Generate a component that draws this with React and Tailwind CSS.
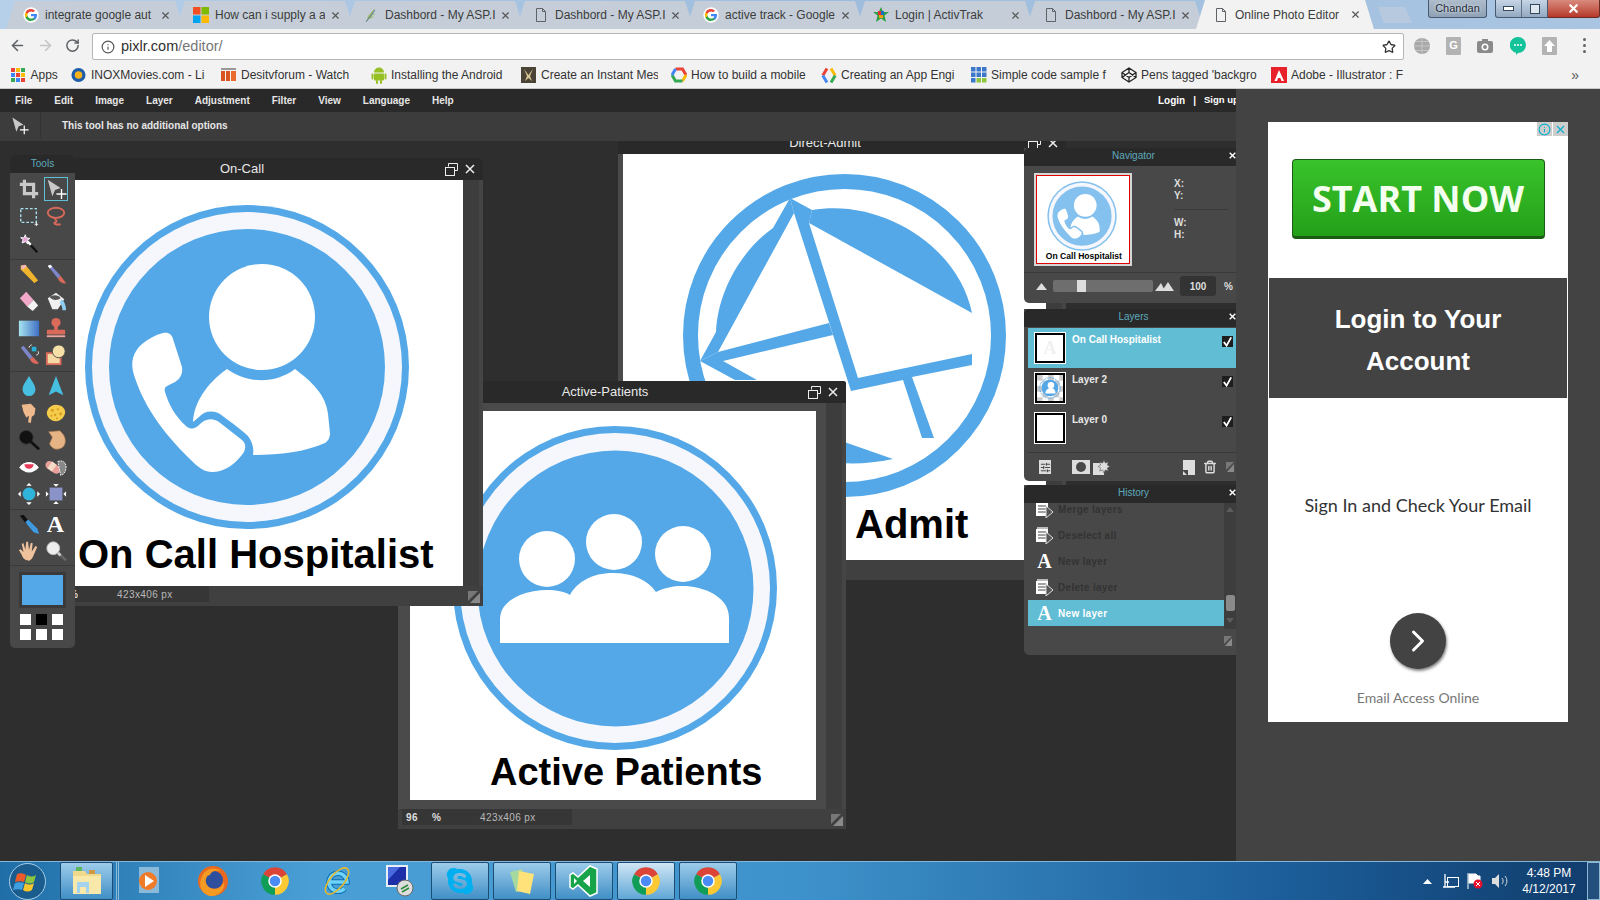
import React from "react";
import { ArrowLeft, ArrowRight, RotateCw, Info, Star, X, ChevronRight, Trash2, SlidersHorizontal } from "lucide-react";
import { FaSkype } from "react-icons/fa";

const G = ({ s = 16 }) => (
  <svg width={s} height={s} viewBox="0 0 24 24" className="shrink-0">
    <circle cx="12" cy="12" r="11.5" fill="#fff" />
    <path d="M21 12.3c0-.7-.1-1.3-.2-1.9H12v3.5h5a4.4 4.4 0 0 1-1.9 2.8v2.3h3c1.8-1.6 2.9-4 2.9-6.7z" fill="#4285F4" />
    <path d="M12 21c2.5 0 4.6-.8 6.1-2.2l-3-2.3c-.8.6-1.9.9-3.1.9-2.4 0-4.4-1.6-5.1-3.8H3.8v2.4A9 9 0 0 0 12 21z" fill="#34A853" />
    <path d="M6.9 13.6a5.400 5.400 0 0 1 0-3.400V7.800H3.800a9 9 0 0 0 0 8.200z" fill="#FBBC05" />
    <path d="M12 6.600c1.300 0 2.500.5 3.400 1.300l2.600-2.600A9 9 0 0 0 3.800 7.800l3.100 2.400C7.600 8.100 9.600 6.600 12 6.600z" fill="#EA4335" />
  </svg>
);
const Ms = () => (
  <svg width="16" height="16" viewBox="0 0 16 16" className="shrink-0">
    <rect width="7.500" height="7.500" fill="#f25022" /><rect x="8.500" width="7.500" height="7.500" fill="#7fba00" />
    <rect y="8.500" width="7.500" height="7.500" fill="#00a4ef" /><rect x="8.500" y="8.500" width="7.500" height="7.500" fill="#ffb900" />
  </svg>
);
const Doc = () => (
  <svg width="16" height="16" viewBox="0 0 16 16" fill="none" stroke="#5f6368" className="shrink-0">
    <path d="M3.500 1.500h6l3 3v10h-9zM9.500 1.500v3h3" />
  </svg>
);
const Feather = () => (
  <svg width="16" height="16" viewBox="0 0 16 16" className="shrink-0">
    <path d="M12 1 5 9l-2 6 3-3 5-2-3-1 4-2-2-1z" fill="#9fb86a" /><path d="M3 15 12 3" stroke="#5b78a8" fill="none" />
  </svg>
);
const Activ = () => (
  <svg width="16" height="16" viewBox="0 0 16 16" className="shrink-0">
    <path d="M8 0l2.200 5H16l-4.500 3.500L13 15l-5-3.500L3 15l1.500-6.500L0 5h5.800z" fill="#2f9e44" />
    <rect x="5" y="4" width="3" height="4" fill="#e03131" /><rect x="8" y="4" width="3" height="4" fill="#1971c2" /><rect x="6" y="8" width="4" height="3" fill="#f59f00" />
  </svg>
);

function Tab({ icon, title, active }) {
  return (
    <div className={`relative -mr-[8px] flex h-[28px] w-[178px] shrink-0 items-center pl-[17px] pr-[9px] [clip-path:polygon(0_100%,9px_0,calc(100%-9px)_0,100%_100%)] ${active ? "z-10 h-[29px] bg-[#f2f2f2]" : "bg-[#c5ced8]"}`}>
      {icon}
      <span className="ml-[6px] w-[110px] overflow-hidden whitespace-nowrap text-[12px] text-[#3c3c3c]">{title}</span>
      <X size={11} strokeWidth={2.500} className="ml-[5px] shrink-0 text-[#555]" />
    </div>
  );
}

function TabStrip() {
  const tabs = [
    [<G />, "integrate google aut"],
    [<Ms />, "How can i supply a a"],
    [<Feather />, "Dashbord - My ASP.I"],
    [<Doc />, "Dashbord - My ASP.I"],
    [<G />, "active track - Google"],
    [<Activ />, "Login | ActivTrak"],
    [<Doc />, "Dashbord - My ASP.I"],
    [<Doc />, "Online Photo Editor", true],
  ];
  return (
    <div className="flex h-[29px] items-end bg-gradient-to-r from-[#b7d0ea] via-[#9dbcdd] to-[#a9c5e2] pl-[6px]">
      {tabs.map((t, i) => <Tab key={i} icon={t[0]} title={t[1]} active={t[2]} />)}
      <div className="mb-[6px] ml-[12px] h-[16px] w-[34px] bg-[#b7c9de] [clip-path:polygon(0_0,80%_0,100%_100%,16%_100%)]" />
      <div className="ml-auto flex h-[29px] items-start self-start">
        <div className="mr-[8px] flex h-[18px] w-[59px] items-center justify-center rounded-b-[3px] border border-t-0 border-[#47596e] bg-gradient-to-b from-[#aebccb] to-[#8ea1b5] text-[11px] text-[#1d2a38] [text-shadow:0_0_3px_white]">Chandan</div>
        <div className="flex h-[18px] w-[53px] overflow-hidden rounded-bl-[3px] border border-t-0 border-[#47596e] bg-gradient-to-b from-[#c6d5e6] to-[#93a9c1]">
          <div className="flex flex-1 items-center justify-center"><div className="h-[5px] w-[11px] border border-[#33465a] bg-white" /></div>
          <div className="flex flex-1 items-center justify-center border-l border-[#5d7186]"><div className="h-[10px] w-[10px] border border-[#33465a] bg-[#dfe7ef]" /></div>
        </div>
        <div className="flex h-[18px] w-[52px] items-center justify-center rounded-br-[3px] border border-l-0 border-t-0 border-[#6b2a22] bg-gradient-to-b from-[#d98a7e] to-[#b5382a]">
          <X size={13} strokeWidth={4} className="text-white" />
        </div>
      </div>
    </div>
  );
}

function Toolbar() {
  return (
    <div className="flex h-[31px] items-start bg-[#f2f2f2]">
      <div className="flex h-[33px] w-[92px] items-center pl-[9px] text-[#5f6368]">
        <ArrowLeft size={17} strokeWidth={2.200} />
        <ArrowRight size={17} strokeWidth={2.200} className="ml-[11px] text-[#c4c4c4]" />
        <RotateCw size={15} strokeWidth={2.400} className="ml-[11px]" />
      </div>
      <div className="mt-[4px] flex h-[27px] w-[1312px] items-center rounded-[2px] border border-[#b5b5b5] bg-white pl-[8px] pr-[7px] pt-[1px]">
        <Info size={14} className="text-[#555]" />
        <span className="ml-[6px] text-[14.500px] text-[#303030]">pixlr.com<span className="text-[#777]">/editor/</span></span>
        <Star size={14} strokeWidth={2.200} className="ml-auto text-[#333]" />
      </div>
      <div className="relative flex h-[31px] flex-1 items-center pl-[9px] pt-[2px]">
        <svg width="18" height="18" viewBox="0 0 18 18" className="shrink-0"><circle cx="9" cy="9" r="8" fill="#a9a9a9" /><path d="M1 9h16M9 1v16M3 4.500h12M3 13.500h12" stroke="#c6c6c6" /></svg>
        <div className="ml-[15px] flex h-[18px] w-[15px] shrink-0 items-center justify-center rounded-[1px] bg-[#b3b3b3] text-[11px] font-bold text-white">G</div>
        <svg width="17" height="16" viewBox="0 0 17 16" className="ml-[16px] shrink-0"><rect y="3" width="16" height="12" rx="2" fill="#8a8a8a" /><rect x="5" y="1" width="6" height="3" fill="#8a8a8a" /><circle cx="8" cy="9" r="3.500" fill="#fff" /><circle cx="8" cy="9" r="2" fill="#8a8a8a" /></svg>
        <svg width="16" height="18" viewBox="0 0 16 18" className="ml-[16px] shrink-0"><path d="M8 0a8 8 0 0 1 0 16l-2 2v-2.200A8 8 0 0 1 8 0z" fill="#15c39a" /><circle cx="5" cy="8" r="1" fill="#fff" /><circle cx="8" cy="8" r="1" fill="#fff" /><circle cx="11" cy="8" r="1" fill="#fff" /></svg>
        <svg width="15" height="18" viewBox="0 0 15 18" className="ml-[16px] shrink-0"><rect width="15" height="18" rx="1" fill="#b3b3b3" /><path d="M7.500 3 13 9h-3v6H5V9H2z" fill="#fff" /></svg>
        <div className="ml-[26px] flex flex-col gap-[3px]"><i className="block h-[3px] w-[3px] rounded-full bg-[#5f6368]" /><i className="block h-[3px] w-[3px] rounded-full bg-[#5f6368]" /><i className="block h-[3px] w-[3px] rounded-full bg-[#5f6368]" /></div>
      </div>
    </div>
  );
}

function Bookmarks() {
  const items = [
    [<svg width="15" height="16" viewBox="0 0 16 16"><circle cx="8" cy="8" r="7.500" fill="#1d5ca8" /><circle cx="8" cy="8" r="4" fill="#f6b21a" /></svg>, "INOXMovies.com - Li"],
    [<svg width="17" height="17" viewBox="0 0 17 17"><rect x="1" y="4" width="4" height="10" fill="#d9541e" /><rect x="6" y="4" width="4" height="10" fill="#d9541e" /><rect x="11" y="4" width="5" height="10" fill="#e96c2d" /><rect x="1" y="1" width="15" height="2" fill="#999" /></svg>, "Desitvforum - Watch"],
    [<svg width="16" height="17" viewBox="0 0 16 17" fill="#97c024"><path d="M3 5.500a5 5 0 0 1 10 0z" /><rect x="3" y="6.500" width="10" height="7" rx="1" /><rect x="0.500" y="6.500" width="2" height="6" rx="1" /><rect x="13.500" y="6.500" width="2" height="6" rx="1" /><rect x="5" y="13" width="2" height="4" rx="1" /><rect x="9" y="13" width="2" height="4" rx="1" /></svg>, "Installing the Android"],
    [<svg width="15" height="16" viewBox="0 0 15 16"><rect width="15" height="16" fill="#4b4436" /><path d="M3 2 7.500 8 12 2 9 9l2 5-3.500-3L4 14l2-5z" fill="#d9c694" /></svg>, "Create an Instant Mes"],
    [<svg width="16" height="16" viewBox="0 0 16 16" fill="none" strokeWidth="3"><path d="M4.500 2h7L15 8" stroke="#ea4335" /><path d="M15 8l-3.500 6" stroke="#fbbc05" /><path d="M11.500 14h-7L1 8" stroke="#34a853" /><path d="M1 8l3.500-6" stroke="#4285f4" /></svg>, "How to build a mobile"],
    [<svg width="16" height="17" viewBox="0 0 16 17" fill="none" strokeWidth="3"><path d="M6 1.500 1.800 8.500" stroke="#ea4335" /><path d="M1.800 8.500 6 15.500" stroke="#4285f4" /><path d="M10 1.500l4.200 7" stroke="#fbbc05" /><path d="M14.200 8.500 10 15.500" stroke="#34a853" /></svg>, "Creating an App Engi"],
    [<svg width="16" height="16" viewBox="0 0 16 16"><g fill="#3b78c9"><rect width="4.500" height="4.500" /><rect x="5.500" width="4.500" height="4.500" /><rect x="11" width="4.500" height="4.500" /><rect y="5.500" width="4.500" height="4.500" /><rect x="5.500" y="5.500" width="4.500" height="4.500" /><rect x="11" y="5.500" width="4.500" height="4.500" /><rect y="11" width="4.500" height="4.500" /></g><rect x="5.500" y="11" width="4.500" height="4.500" fill="#8ec63f" /><rect x="11" y="11" width="4.500" height="4.500" fill="#8ec63f" /></svg>, "Simple code sample f"],
    [<svg width="16" height="16" viewBox="0 0 16 16" fill="none" stroke="#222" strokeWidth="1.300"><path d="M8 1l7 4.500v5L8 15l-7-4.500v-5zM8 1v4.500M8 15v-4.500M1 5.500l7 5 7-5M1 10.500l7-5 7 5" /></svg>, "Pens tagged 'backgro"],
    [<svg width="16" height="16" viewBox="0 0 16 16"><rect width="16" height="16" fill="#e8202a" /><path d="M8 3 3.500 14H6l1-3h2.500L8.500 9 8 7.500l2.500 6.500H13z" fill="#fff" /></svg>, "Adobe - Illustrator : F"],
  ];
  return (
    <div className="flex h-[29px] items-center border-b border-[#c9c9c9] bg-[#f2f2f2] pl-[11px] pt-[2px] text-[12px] text-[#333]">
      <div className="flex w-[59px] items-center">
        <div className="grid grid-cols-3 gap-[1.500px]">
          {[0, 1, 2, 3, 4, 5, 6, 7, 8].map((i) => <i key={i} className={`block h-[3.500px] w-[3.500px] ${i % 4 === 0 ? "bg-[#ea4335]" : i % 4 === 1 ? "bg-[#fbbc05]" : i % 4 === 2 ? "bg-[#34a853]" : "bg-[#4285f4]"}`} />)}
        </div>
        <span className="ml-[6px]">Apps</span>
      </div>
      {items.map((b, i) => (
        <div key={i} className="flex w-[150px] shrink-0 items-center">
          <span className="flex w-[17px] shrink-0 items-center justify-center">{b[0]}</span>
          <span className="ml-[4px] w-[117px] overflow-hidden whitespace-nowrap">{b[1]}</span>
        </div>
      ))}
      <span className="ml-auto mr-[21px] text-[14px] text-[#555]">»</span>
    </div>
  );
}

function OnCallArt({ blue = "#54a8e8", fontSize = 40 }) {
  return (
    <svg viewBox="40 180 423 406" className="block h-full w-full">
      <rect x="40" y="180" width="423" height="406" fill="#fff" />
      <circle cx="247" cy="367" r="162" fill={blue} />
      <circle cx="247" cy="367" r="155" fill="#f6f7fc" />
      <circle cx="247" cy="367" r="138" fill={blue} />
      <circle cx="262" cy="317" r="53" fill="#fff" />
      <path d="M227 369C248 384 275 384 295 369C312 382 326 395 328 414L330 433C330 438 328 441 325 443C305 452 280 455 253 455C254 449 253 442 247 435C238 427 228 420 220 414C212 410 205 411 199 417L193 422C194 403 206 384 227 369Z" fill="#fff" />
      <path d="M163 333C169 332 172 335 173 339L182 367C183 374 180 379 175 382L167 386C165 387 164 389 165 392C169 405 175 416 186 426C191 430 195 429 199 425C204 419 212 417 219 422L242 440C247 444 246 451 241 456C233 466 223 472 212 472C205 472 199 468 193 462C167 437 145 410 134 375C130 362 133 352 142 344C148 339 155 335 163 333Z" fill="#fff" />
      <text x="78" y="568" fontFamily="'Liberation Sans', Arial, sans-serif" fontWeight="700" fontSize={fontSize} fill="#000">On Call Hospitalist</text>
    </svg>
  );
}

function ActiveArt() {
  const blue = "#54a8e8";
  return (
    <svg viewBox="410 411 406 389" className="block h-full w-full">
      <rect x="410" y="411" width="406" height="389" fill="#fff" />
      <circle cx="615" cy="588" r="162" fill={blue} />
      <circle cx="615" cy="588" r="155" fill="#f6f7fc" />
      <circle cx="615.500" cy="588.500" r="138" fill={blue} />
      <circle cx="547" cy="559" r="28" fill="#fff" />
      <circle cx="614" cy="542" r="28" fill="#fff" />
      <circle cx="683" cy="554" r="28" fill="#fff" />
      <path d="M500 643H729V618C729 606 722 598 710 592C698 586 675 582 656 592C648 580 632 573 613 573C592 573 577 582 570 595C560 589 538 588 520 595C507 601 500 608 500 620Z" fill="#fff" />
      <text x="490" y="785" fontFamily="'Liberation Sans', Arial, sans-serif" fontWeight="700" fontSize="38" fill="#000">Active Patients</text>
    </svg>
  );
}

function DirectArt() {
  const blue = "#54a8e8";
  return (
    <svg viewBox="623 154 423 406" className="block h-full w-full">
      <rect x="623" y="154" width="423" height="406" fill="#fff" />
      <circle cx="844.500" cy="335.500" r="154" fill="none" stroke={blue} strokeWidth="15" />
      <path d="M812 210C880 198 958 245 972 313L809 223Z" fill={blue} />
      <path d="M794 213 790 198 773 228C742 250 718 290 716 332L700 361 718 352Z" fill={blue} />
      <path d="M718 352 829 323 833 335 723 361 757 380H735L700 361Z" fill={blue} />
      <path d="M790 198 812 210 809 223 858 378 972 354 972 365 912 377 934 438H922L903 380 851 391 794 213Z" fill={blue} />
      <path d="M830 437 893 459Q860 466 830 462Z" fill={blue} />
      <text x="855" y="538" fontFamily="'Liberation Sans', Arial, sans-serif" fontWeight="700" fontSize="40" fill="#000">Admit</text>
    </svg>
  );
}

const Restore = () => (
  <svg width="13" height="13" viewBox="0 0 13 13" fill="none" stroke="#eee"><path d="M3.500 3.500v-3h9v7h-3" /><rect x="0.500" y="4.500" width="9" height="8" /></svg>
);
const CloseX = ({ s = 10, c = "#eee", w = 1.500 }) => (
  <svg width={s} height={s} viewBox="0 0 10 10" stroke={c} strokeWidth={w}><path d="M1 1l8 8M9 1l-8 8" /></svg>
);
const Resize = () => (
  <svg width="12" height="12" viewBox="0 0 12 12"><path d="M0 0h10L0 10z" fill="#777" /><path d="M12 2v10H2z" fill="#8a8a8a" /></svg>
);

function Win({ pos, title, pad, children, pct }) {
  return (
    <div className={`absolute flex h-[448px] w-[448px] flex-col rounded-[3px] bg-[#4a4a4a] ${pos}`}>
      <div className="flex h-[22px] shrink-0 items-center rounded-t-[3px] bg-[#292929] text-[13px] text-[#e8e8e8]">
        <div className="-mr-[4px] w-[414px] shrink-0 text-center">{title}</div>
        <Restore />
        <span className="ml-[7px]"><CloseX /></span>
      </div>
      <div className="flex h-[406px] shrink-0">
        <div className={`flex-1 ${pad}`}>{children}</div>
        <div className="w-[16px] bg-[#3d3d3d]" />
        <div className="w-[4px] bg-[#454545]" />
      </div>
      <div className="flex h-[20px] items-start bg-[#404040] pl-[4px] pr-[3px]">
        <div className="flex h-[16px] w-[170px] items-center bg-[#363636] pl-[4px] text-[10px] tracking-[0.400px] text-[#b9b9b9]">
          <span className="w-[26px] font-bold text-[#ddd]">{pct}</span>
          <span className="w-[48px] font-bold text-[#ddd]">%</span>
          <span>423x406 px</span>
        </div>
        <span className="ml-auto mt-[5px]"><Resize /></span>
      </div>
    </div>
  );
}

const toolIcons = {
  crop: <g fill="none" stroke="#c9c9c9" strokeWidth="3.500"><path d="M7 2v15h15" /><path d="M2 7h15v15" /></g>,
  move: <g><path d="M3 2l14 9-6 2-3 7z" fill="#c9c9c9" /><path d="M18 12v11M12.500 17.500h11" stroke="#fff" strokeWidth="1.500" /></g>,
  marquee: <g><rect x="3" y="4" width="17" height="15" fill="none" stroke="#a8e0f0" strokeWidth="1.500" strokeDasharray="3 2" /><path d="M20 19v4M18 21h4" stroke="#fff" /></g>,
  lasso: <g fill="none" stroke="#d9695a" strokeWidth="2"><ellipse cx="12" cy="8.500" rx="9" ry="5.500" /><path d="M10 14c2 2 4 4 1 5s2 3 6 2" /></g>,
  wand: <g><path d="M10 10l11 12" stroke="#111" strokeWidth="2.500" /><path d="M10 10l4 4" stroke="#fff" strokeWidth="2.500" /><path d="M8 3l1 3.500L13 7l-3 2 .5 4-2.500-2.500-3.500 1.500 1-3.500L3 6l3.500.5z" fill="#e8a0d8" stroke="#fff" /></g>,
  pencil: <g><path d="M3 3l5-1 14 17-4 3L3 7z" fill="#efb32e" /><path d="M3 3l5-1 1.500 2-5 3.500z" fill="#f3b7b7" /><path d="M18 22l4-3 1 5z" fill="#444" /></g>,
  brush: <g><path d="M3 3l3-1 11 12-3 3z" fill="#7d86c9" /><path d="M3 3l3-1 2 2-3 2z" fill="#fff" /><path d="M14 17l3-3 6 8c-4 1-7-1-9-5z" fill="#d9695a" /></g>,
  eraser: <g><path d="M2 9l7-7 8 9-7 7z" fill="#f2a8c8" /><path d="M10 18l7-7 5 6-6 6z" fill="#f4f4f4" /></g>,
  bucket: <g><path d="M3 9l9-6 9 7-7 11H8z" fill="#f0f0f0" /><path d="M5 8c3-3 10-3 12 1-4 3-9 2-12-1z" fill="#555" /><path d="M18 10c4 3 5 8 5 12h-4c0-3-1-6-3-8z" fill="#8fcdf0" /></g>,
  gradient: <g><defs><linearGradient id="tg1"><stop offset="0" stopColor="#a7e4f0" /><stop offset="1" stopColor="#3f6fc4" /></linearGradient></defs><rect x="1" y="4" width="22" height="17" fill="url(#tg1)" /></g>,
  stamp: <g fill="#d9695a"><circle cx="12" cy="6" r="5" /><rect x="10" y="9" width="4" height="6" /><rect x="2" y="14" width="20" height="5" rx="1" /><rect x="2" y="20" width="20" height="2" fill="#e9a79d" /></g>,
  replace: <g><path d="M3 4l3-2 10 12-3 3z" fill="#7d86c9" /><path d="M13 17l3-3 7 7c-4 2-8 0-10-4z" fill="#d9695a" /><rect x="15" y="3" width="5" height="5" fill="#2bb0d8" /><path d="M12 4c1-3 3-3 3-3M22 8c1 2 0 4-2 4" stroke="#fff" fill="none" /></g>,
  shape: <g><rect x="2" y="10" width="15" height="12" fill="#f4d9a5" stroke="#d9695a" strokeWidth="2" /><circle cx="15" cy="8" r="7" fill="#f6e0a8" stroke="#4a4a4a" /></g>,
  drop: <path d="M12 1c4 7 7 10 7 15a7 7 0 0 1-14 0c0-5 3-8 7-15z" fill="#46bfe0" />,
  cone: <path d="M12 1l8 21-8-4-8 4z" fill="#46bfe0" />,
  smudge: <path d="M4 3l10-1 5 5-1 7-3 2-1 7-3-1 1-7-3 2-3-6z" fill="#eeb98d" />,
  sponge: <g><path d="M12 3c6 0 10 4 10 8s-4 10-10 10S2 16 2 12 6 3 12 3z" fill="#f4cb4a" /><g fill="#d49a1e"><circle cx="8" cy="9" r="1.500" /><circle cx="14" cy="8" r="1.200" /><circle cx="17" cy="13" r="1.500" /><circle cx="11" cy="14" r="1.300" /><circle cx="7" cy="15" r="1" /><circle cx="13" cy="18" r="1" /></g></g>,
  burn: <g><circle cx="9" cy="9" r="7.500" fill="#111" stroke="#333" /><path d="M14 14l9 8" stroke="#111" strokeWidth="3" /></g>,
  dodge: <path d="M4 3l12-1c4 3 7 8 6 13-1 5-5 7-9 7-4 0-7-3-8-6L8 9z" fill="#e6b385" stroke="#a87a50" strokeWidth="0.700" />,
  eye: <g><path d="M1 12c6-8 16-8 22 0-6 8-16 8-22 0z" fill="#fff" /><path d="M7 9h10a5 5 0 0 1-10 0z" fill="#e83a5a" /><path d="M1 12c6-8 16-8 22 0" fill="none" stroke="#333" /></g>,
  bandage: <g><rect x="0" y="8" width="18" height="9" rx="4.500" transform="rotate(35 9 12)" fill="#e9a09a" /><rect x="5" y="7" width="6" height="9" transform="rotate(35 8 11)" fill="#f4dcc8" /><path d="M14 6c5-2 9 1 9 6s-3 9-6 9z" fill="#888" stroke="#fff" strokeDasharray="2 1" /></g>,
  bloat: <g><circle cx="12" cy="12" r="7" fill="#30b4dc" /><g fill="#fff"><path d="M12 0l3 3H9zM12 24l3-3H9zM0 12l3-3v6zM24 12l-3-3v6z" /></g></g>,
  pinch: <g><rect x="5" y="5" width="14" height="14" fill="#8a93c8" /><g fill="#fff"><path d="M12 4 9 1h6zM12 20l3 3H9zM4 12 1 9v6zM20 12l3-3v6z" /></g></g>,
  dropper: <g><path d="M2 3l4-1 6 7-3 3z" fill="#111" /><path d="M8 10l3-3 10 10 2 6-6-2z" fill="#3f9be0" /></g>,
  hand: <path d="M11 22c-4 0-6-3-7-6L1 11l2-1 3 3L4 4l2-.5 2 7L9 2h2l1 9 2-8 2 .5-1 9 4-6 2 1-4 9c-1 3-3 6-6 6z" fill="#eec29c" />,
  zoom: <g><circle cx="9" cy="9" r="7" fill="#eee" stroke="#bbb" /><path d="M14 14l9 8" stroke="#666" strokeWidth="3" /><path d="M14 14l3 3" stroke="#ccc" strokeWidth="3" /></g>,
};

function Tool({ k, active }) {
  return (
    <div className="flex h-[27px] w-[27px] items-center justify-center">
      <div className={`flex h-[24px] w-[24px] items-center justify-center ${active ? "border border-[#5fc0d8]" : ""}`}>
        {k === "text" ? (
          <span className="font-['Liberation_Serif',serif] text-[24px] font-bold leading-none text-white">A</span>
        ) : (
          <svg width="22" height="22" viewBox="0 0 24 24">{toolIcons[k]}</svg>
        )}
      </div>
    </div>
  );
}
const Group = ({ items, pb }) => (
  <div className={`grid grid-cols-[27px_27px] border-b border-[#3a3a3a] pl-[5px] ${pb}`}>
    {items.map((k) => k === "_" ? <div key={k} /> : <Tool key={k} k={k} active={k === "move"} />)}
  </div>
);

function Tools() {
  return (
    <div className="absolute left-[10px] top-[14px] h-[493px] w-[65px] rounded-[5px] bg-[#484848]">
      <div className="flex h-[18px] items-center justify-center rounded-t-[5px] bg-[#292929] pb-[2px] text-[10px] text-[#5fa9bd]">Tools</div>
      <div className="pt-[2px]">
        <Group items={["crop", "move", "marquee", "lasso", "wand", "_"]} pb="pb-[3px]" />
        <Group items={["pencil", "brush", "eraser", "bucket", "gradient", "stamp", "replace", "shape"]} pb="pb-[3px]" />
        <Group items={["drop", "cone", "smudge", "sponge", "burn", "dodge", "eye", "bandage", "bloat", "pinch"]} pb="pb-[2px]" />
        <Group items={["dropper", "text", "hand", "zoom"]} pb="pb-[1px]" />
      </div>
      <div className="mx-[9px] mt-[6px] border-[3px] border-[#3a3a3a] bg-[#54a8e8]"><div className="h-[30px]" /></div>
      <div className="ml-[10px] mt-[6px] grid grid-cols-[11px_11px_11px] gap-x-[5px] gap-y-[4px]">
        {[0, 1, 2, 3, 4, 5].map((i) => <div key={i} className={`h-[11px] w-[11px] ${i === 1 ? "bg-black" : "bg-white"}`} />)}
      </div>
    </div>
  );
}

const PanelHead = ({ title }) => (
  <div className="flex h-[18px] shrink-0 items-center rounded-tl-[5px] bg-[#292929] pb-[3px] pl-[74px] text-[10px] text-[#5fa9bd]">
    <span className="w-[71px] text-center">{title}</span>
    <span className="ml-auto"><CloseX s={7} c="#fff" w={2} /></span>
  </div>
);

function Navigator() {
  return (
    <div className="absolute left-[1024px] top-[7px] flex h-[155px] w-[212px] flex-col rounded-bl-[5px] bg-[#484848]">
      <PanelHead title="Navigator" />
      <div className="flex h-[107px] border-b border-[#3a3a3a] pl-[10px] pt-[7px]">
        <div className="h-[93px] w-[98px] border-2 border-[#d5d5d5] bg-white">
          <div className="h-full w-full border border-[#e00000]"><OnCallArt blue="#84c1ee" fontSize={40} /></div>
        </div>
        <div className="ml-[42px] w-[54px] pt-[5px] text-[10px] font-bold leading-[12px] text-[#ddd]">
          <div>X:</div><div>Y:</div>
          <div className="my-[7px] h-px bg-[#3a3a3a]" />
          <div>W:</div><div>H:</div>
        </div>
      </div>
      <div className="flex items-center pl-[12px] pt-[3px]">
        <svg width="11" height="7" viewBox="0 0 11 7"><path d="M5.500 0l5.500 7H0z" fill="#ddd" /></svg>
        <div className="ml-[6px] h-[12px] w-[100px] rounded-[2px] bg-[#6e6e6e] pl-[24px]"><div className="h-[12px] w-[9px] bg-[#ddd]" /></div>
        <svg width="19" height="9" viewBox="0 0 19 9" className="ml-[2px]"><path d="M6 1l4 8H0zM13 0l6 9H7z" fill="#ddd" /></svg>
        <div className="ml-[6px] flex h-[20px] w-[36px] items-center justify-center rounded-[3px] bg-[#333] text-[10px] font-bold text-[#ddd]">100</div>
        <span className="ml-[8px] text-[10px] font-bold text-[#ddd]">%</span>
      </div>
    </div>
  );
}

const Thumb = ({ children }) => (
  <div className="h-[32px] w-[32px] shrink-0 border border-white bg-black p-px"><div className="h-full w-full overflow-hidden border border-black bg-white">{children}</div></div>
);
const Check = () => (
  <div className="ml-auto mr-[3px] mt-[4px] flex h-[11px] w-[11px] items-center justify-center bg-[#1e1e1e]">
    <svg width="12" height="12" viewBox="0 0 12 12" fill="none" stroke="#fff" strokeWidth="2"><path d="M2 6l3 4 5-9" /></svg>
  </div>
);

function LayerRow({ name, active, thumb }) {
  return (
    <div className={`flex h-[40px] pl-[6px] pt-[4px] ${active ? "bg-[#60bdd4]" : ""}`}>
      <Thumb>{thumb}</Thumb>
      <span className={`ml-[6px] text-[10px] font-bold ${active ? "text-white" : "text-[#e8e8e8]"}`}>{name}</span>
      <Check />
    </div>
  );
}

function Layers() {
  return (
    <div className="absolute left-[1024px] top-[168px] flex h-[172px] w-[212px] flex-col rounded-bl-[5px] bg-[#484848]">
      <PanelHead title="Layers" />
      <div className="ml-[4px] h-[126px] border-b border-[#3a3a3a] pt-px">
        <LayerRow name="On Call Hospitalist" active thumb={<div className="flex h-full items-center justify-center font-['Liberation_Serif',serif] text-[18px] font-bold text-[#f0f0f0]">A</div>} />
        <LayerRow name="Layer 2" thumb={
          <svg viewBox="0 0 28 28" className="h-full w-full">
            <rect width="28" height="28" fill="#fff" />
            {[0, 6, 12, 18, 24].map((a) => [0, 6, 12, 18, 24].map((b) => ((a + b) / 6) % 2 === 0 ? <rect key={`${a}-${b}`} x={a} y={b} width="6" height="6" fill="#ccc" /> : null))}
            <circle cx="14" cy="14" r="11" fill="none" stroke="#54a8e8" strokeDasharray="2 1" />
            <circle cx="14" cy="14" r="9" fill="#54a8e8" />
            <circle cx="15" cy="11" r="3.500" fill="#fff" />
            <path d="M9 20c0-4 3-6 6-6s5 2 5 6z" fill="#fff" />
          </svg>
        } />
        <LayerRow name="Layer 0" thumb={null} />
      </div>
      <div className="flex flex-1 items-center pl-[15px] pr-[2px] text-[#eee]">
        <div className="flex h-[14px] w-[12px] items-center justify-center bg-[#ddd] text-[#484848]"><SlidersHorizontal size={11} strokeWidth={2.500} /></div>
        <div className="ml-[21px] flex h-[14px] w-[18px] items-center justify-center bg-[#ddd]"><i className="block h-[10px] w-[10px] rounded-full bg-[#484848]" /></div>
        <svg width="17" height="15" viewBox="0 0 17 15" className="ml-[3px]"><rect y="3" width="11" height="12" fill="#ddd" /><path d="M11 0l1.300 3 3-1-1 3 2.700 1.500-2.700 1.500 1 3-3-1L11 13l-1.300-3-3 1 1-3L5 6.500 7.700 5l-1-3 3 1z" fill="#ddd" stroke="#484848" strokeWidth="0.500" /></svg>
        <svg width="12" height="15" viewBox="0 0 12 15" className="ml-auto"><path d="M0 0h12v15H5v-5H0zM0 11l4 4H0z" fill="#ddd" /></svg>
        <Trash2 size={14} strokeWidth={2.500} className="ml-[8px] text-[#ddd]" />
        <span className="ml-[9px]"><svg width="8" height="10" viewBox="0 0 8 10"><path d="M0 0h8L0 8z" fill="#777" /><path d="M8 2v8H1z" fill="#8a8a8a" /></svg></span>
      </div>
    </div>
  );
}

const HistIcon = ({ type }) => type === "A" ? (
  <span className="flex w-[17px] justify-center font-['Liberation_Serif',serif] text-[20px] font-bold leading-none text-white">A</span>
) : (
  <svg width="17" height="18" viewBox="0 0 17 18" className="shrink-0">
    <rect x="1" y="1" width="11" height="14" fill="#bbb" /><rect x="0" y="3" width="12" height="13" fill="#fff" />
    <path d="M2 6h8M2 9h8M2 12h8" stroke="#444" />
    <path d="M10 6l7 6-7 6z" fill="#555" stroke="#ddd" />
  </svg>
);

function History() {
  const rows = [["d", "Merge layers"], ["d", "Deselect all"], ["A", "New layer"], ["d", "Delete layer"], ["A", "New layer", true]];
  return (
    <div className="absolute left-[1024px] top-[344px] flex h-[170px] w-[212px] flex-col rounded-bl-[5px] bg-[#484848]">
      <PanelHead title="History" />
      <div className="ml-[4px] flex h-[126px]">
        <div className="w-[196px] overflow-hidden">
          <div className="-mt-[7px]">
            {rows.map((r, i) => (
              <div key={i} className={`flex h-[26px] items-center pl-[8px] text-[10px] font-bold tracking-[0.300px] ${r[2] ? "bg-[#60bdd4] text-white" : "text-[#333]"}`}>
                <HistIcon type={r[0]} />
                <span className="ml-[5px]">{r[1]}</span>
              </div>
            ))}
          </div>
        </div>
        <div className="flex w-[12px] flex-col items-center bg-[#3d3d3d] pt-[4px]">
          <svg width="8" height="5" viewBox="0 0 8 5"><path d="M4 0l4 5H0z" fill="#5c5c5c" /></svg>
          <div className="mt-[83px] h-[16px] w-[9px] rounded-[2px] bg-[#8a8a8a]" />
          <svg width="8" height="5" viewBox="0 0 8 5" className="mt-[7px]"><path d="M0 0h8L4 5z" fill="#5c5c5c" /></svg>
        </div>
      </div>
      <div className="flex flex-1 items-center justify-end pb-[2px] pr-[4px]"><svg width="8" height="10" viewBox="0 0 8 10"><path d="M0 0h8L0 8z" fill="#777" /><path d="M8 2v8H1z" fill="#8a8a8a" /></svg></div>
    </div>
  );
}

function Editor() {
  const menu = ["File", "Edit", "Image", "Layer", "Adjustment", "Filter", "View", "Language", "Help"];
  return (
    <div className="flex w-[1236px] shrink-0 flex-col">
      <div className="flex h-[23px] items-center bg-[#292929] pl-[15px] text-[10px] font-bold text-[#e6e6e6]">
        <div className="flex gap-[22px]">{menu.map((m) => <span key={m}>{m}</span>)}</div>
        <div className="ml-auto flex w-[78px] shrink-0 whitespace-nowrap text-white">
          <span>Login</span><span className="mx-[8px]">|</span><span className="text-[9.500px]">Sign up</span>
        </div>
      </div>
      <div className="flex h-[29px] items-center bg-[#3c3c3c] pb-[3px]">
        <div className="flex h-[26px] w-[41px] items-center border-r border-[#333] pl-[10px]">
          <svg width="19" height="19" viewBox="0 0 24 24">{toolIcons.move}</svg>
        </div>
        <span className="ml-[21px] text-[10px] font-bold text-[#e6e6e6]">This tool has no additional options</span>
      </div>
      <div className="relative h-[720px] overflow-hidden bg-[#2e2e2e]">
        <Win pos="left-[618px] -top-[9px]" title="Direct-Admit" pad="pl-[5px]" pct="100"><div className="h-[406px] w-[423px]"><DirectArt /></div></Win>
        <Win pos="left-[398px] top-[240px]" title="Active-Patients" pad="pl-[12px] pt-[8px]" pct="96"><div className="h-[389px] w-[406px]"><ActiveArt /></div></Win>
        <Win pos="left-[35px] top-[17px]" title="On-Call" pad="pl-[5px]" pct="100"><div className="h-[406px] w-[423px]"><OnCallArt /></div></Win>
        <Tools />
        <Navigator />
        <Layers />
        <History />
      </div>
    </div>
  );
}

function Ad() {
  return (
    <div className="flex-1 bg-[#434343] pl-[32px] pt-[33px]">
      <div className="relative flex h-[600px] w-[300px] flex-col bg-white">
        <div className="absolute right-0 top-0 flex gap-[1px]">
          <div className="flex h-[14px] w-[15px] items-center justify-center bg-[#cdcdcd]"><Info size={13} className="text-[#00aecd]" /></div>
          <div className="flex h-[14px] w-[15px] items-center justify-center bg-[#cdcdcd]"><X size={13} className="text-[#00aecd]" /></div>
        </div>
        <div className="flex h-[156px] shrink-0 items-start justify-center pt-[37px]">
          <div className="flex h-[80px] w-[253px] items-center justify-center rounded-[4px] border border-b-[3px] border-[#1b5c14] bg-gradient-to-b from-[#39c32c] to-[#24a018] pt-[2px] font-['Open_Sans',sans-serif] text-[36px] font-bold text-[#f4fff0]">START NOW</div>
        </div>
        <div className="mx-px flex h-[120px] shrink-0 items-center justify-center bg-[#434343] pt-[3px] text-center text-[26px] font-bold leading-[42px] text-white">
          <div>Login to Your<br />Account</div>
        </div>
        <div className="flex h-[215px] shrink-0 items-center justify-center font-['Lato',sans-serif] text-[18px] text-[#333]">Sign In and Check Your Email</div>
        <div className="flex justify-center"><div className="flex h-[56px] w-[56px] items-center justify-center rounded-full bg-[#434343] shadow-[1px_2px_3px_rgba(0,0,0,0.5)]"><ChevronRight size={36} strokeWidth={2} className="text-white" /></div></div>
        <div className="mt-[18px] text-center font-['Lato',sans-serif] text-[14px] text-[#777]">Email Access Online</div>
      </div>
    </div>
  );
}

const Chrome = ({ s = 30 }) => (
  <svg width={s} height={s} viewBox="0 0 24 24">
    <path d="M12 12 2.470 6.500A11 11 0 0 1 21.530 6.500Z" fill="#db4437" />
    <path d="M12 12 21.530 6.500A11 11 0 0 1 12 23Z" fill="#fcc934" />
    <path d="M12 12 12 23A11 11 0 0 1 2.470 6.500Z" fill="#109d58" />
    <circle cx="12" cy="12" r="5.400" fill="#fff" /><circle cx="12" cy="12" r="4.200" fill="#4b8bf5" />
  </svg>
);
const TaskBtn = ({ children, on }) => (
  <div className={`mr-[4px] flex h-[38px] w-[58px] shrink-0 items-center justify-center rounded-[2px] border border-[#1d4d75] bg-gradient-to-b ${on ? "from-[#cfe6f5] to-[#5ea7d6]" : "from-[#9cccea] to-[#3f8fc6]"}`}>{children}</div>
);

function Taskbar() {
  return (
    <div className="flex h-[39px] items-center border-t border-[#87b5d6] bg-[linear-gradient(to_right,#1f6ea8,#4aa0d6_20%,#3e92cb_50%,#1c5e9a_80%,#103c6b)]">
      <div className="flex w-[60px] shrink-0 justify-center pr-[6px]">
        <svg width="37" height="37" viewBox="0 0 37 37">
          <circle cx="18.500" cy="18.500" r="18" fill="#1a5c8d" stroke="#a9cfe8" />
          <path d="M8 11c3-1 6-1 9 1l-2 7c-3-1-6-1-9 0z" fill="#ea5a2b" /><path d="M18 12c3 2 6 2 9 0l-2 7c-3 2-6 2-9 0z" fill="#8cc63e" />
          <path d="M6 20c3-1 6-1 9 0l-2 7c-3-1-6-1-9 0z" fill="#3f9fe0" /><path d="M16 20c3 2 6 2 9 0l-2 7c-3 2-6 2-9 0z" fill="#f7c52c" />
        </svg>
      </div>
      <div className="flex h-[38px] w-[53px] shrink-0 items-center justify-center rounded-[2px] border border-[#1d4d75] bg-gradient-to-b from-[#9cccea] to-[#3f8fc6]">
        <svg width="32" height="30" viewBox="0 0 32 30"><path d="M2 5h12l2 3h14v20H2z" fill="#f0d98a" /><rect x="2" y="10" width="28" height="18" fill="#f8e9aa" /><rect x="5" y="1" width="6" height="4" fill="#5db75d" /><rect x="18" y="4" width="6" height="4" fill="#c94" /><path d="M6 27V16h12v11h-3v-6H9v6z" fill="#a3d3ee" /></svg>
      </div>
      <div className="ml-[3px] h-[38px] w-[3px] border-x border-[#8dbad8]" />
      <div className="ml-[16px] flex w-[62px] shrink-0 justify-start">
        <svg width="30" height="32" viewBox="0 0 30 32"><rect x="4" y="2" width="20" height="26" fill="#8ab9d9" /><circle cx="13" cy="16" r="9" fill="#ef7a28" /><path d="M10 10l9 6-9 6z" fill="#fff" /></svg>
      </div>
      <div className="flex w-[63px] shrink-0">
        <svg width="32" height="32" viewBox="0 0 32 32"><circle cx="16" cy="16" r="15" fill="#e8691f" /><circle cx="17" cy="15" r="9" fill="#2d4f9e" /><path d="M4 14C7 4 16 1 24 6c-5-1-10 0-11 4-3 0-6 5-3 10 4 6 14 5 17-3 2 8-6 14-12 14C7 31 1 23 4 14z" fill="#f59a23" /></svg>
      </div>
      <div className="flex w-[62px] shrink-0"><Chrome s={30} /></div>
      <div className="flex w-[63px] shrink-0">
        <svg width="32" height="32" viewBox="0 0 32 32" fill="none">
          <path d="M7 17h18a9 9 0 1 0-2.500 6.500" stroke="#0d6fb5" strokeWidth="5.500" />
          <path d="M7 17h18a9 9 0 1 0-2.500 6.500" stroke="#6fd3f8" strokeWidth="3.500" />
          <ellipse cx="15" cy="16" rx="16" ry="7" transform="rotate(-50 15 16)" stroke="#e6b82c" strokeWidth="1.600" />
        </svg>
      </div>
      <div className="flex w-[46px] shrink-0">
        <svg width="30" height="34" viewBox="0 0 30 34"><rect x="1" y="1" width="22" height="22" fill="#e8eef5" /><rect x="3" y="3" width="18" height="18" fill="#1c2fa8" /><path d="M3 3h12L3 16z" fill="#4a6be0" /><circle cx="20" cy="24" r="8" fill="#ddd" stroke="#666" /><path d="M16 25l7-4M17 28l7-4" stroke="#2d8a3c" strokeWidth="1.500" /></svg>
      </div>
      <TaskBtn><FaSkype size={30} className="text-[#00aff0]" /></TaskBtn>
      <TaskBtn><svg width="32" height="30" viewBox="0 0 32 30"><path d="M4 6l12-3 6 20-12 3z" fill="#a6d9a0" /><path d="M13 5l15 3-4 20-13-3z" fill="#ffe27a" /></svg></TaskBtn>
      <TaskBtn><svg width="30" height="34" viewBox="0 0 30 34"><path d="M21 2l7 3v24l-7 3L9 21l-5 4-3-2V11l3-2 5 4z" fill="#16a34a" stroke="#fff" strokeWidth="1.500" /><path d="M21 11v12l-7-6zM5 14v6l3-3z" fill="#fff" /></svg></TaskBtn>
      <TaskBtn on><Chrome s={30} /></TaskBtn>
      <TaskBtn><Chrome s={30} /></TaskBtn>
      <div className="ml-auto flex items-center text-white">
        <svg width="9" height="5" viewBox="0 0 9 5"><path d="M4.500 0 9 5H0z" fill="#fff" /></svg>
        <svg width="17" height="15" viewBox="0 0 17 15" className="ml-[11px]" fill="none" stroke="#fff"><rect x="4.500" y="3.500" width="11" height="9" /><path d="M2 0v8H6M2 8v5M0 13h12" strokeWidth="1.300" /></svg>
        <svg width="16" height="16" viewBox="0 0 16 16" className="ml-[7px]"><path d="M1 0v16M2 1h7l2 2h2v7H2z" stroke="#fff" fill="#fff" /><circle cx="11" cy="11" r="4.500" fill="#e8112d" /><path d="M9 9l4 4M13 9l-4 4" stroke="#fff" /></svg>
        <svg width="16" height="14" viewBox="0 0 16 14" className="ml-[9px]" fill="none"><path d="M0 4h3l4-4v14l-4-4H0z" fill="#ddd" /><path d="M10 4c1.500 2 1.500 4 0 6M13 2c2.500 3 2.500 7 0 10" stroke="#ddd" /></svg>
        <div className="ml-[9px] flex w-[64px] flex-col items-center text-[12px] leading-[16px]"><span>4:48 PM</span><span>4/12/2017</span></div>
        <div className="ml-[6px] h-[38px] w-[13px] border border-[#8fb6d2] bg-[#234f7d]" />
      </div>
    </div>
  );
}

export default function App() {
  return (
    <div className="flex h-[900px] w-[1600px] flex-col overflow-hidden font-['Liberation_Sans',Arial,sans-serif]">
      <TabStrip />
      <Toolbar />
      <Bookmarks />
      <div className="flex h-[772px] shrink-0">
        <Editor />
        <Ad />
      </div>
      <Taskbar />
    </div>
  );
}
